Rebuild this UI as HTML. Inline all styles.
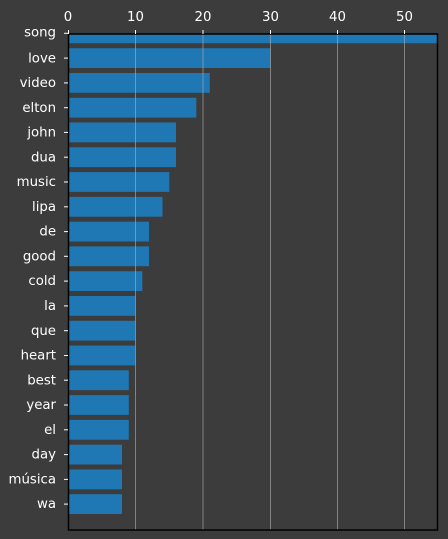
<!DOCTYPE html><html><head><style>body{margin:0;background:#3c3c3c}svg{display:block}text{font-family:"DejaVu Sans","Liberation Sans",sans-serif;font-size:13.3px;fill:#fff}</style></head><body>
<svg width="448" height="539" xmlns="http://www.w3.org/2000/svg">
<rect width="448" height="539" fill="#3c3c3c"/>
<defs><clipPath id="c"><rect x="68" y="34" width="370" height="496"/></clipPath></defs>
<g clip-path="url(#c)" fill="#1f77b4">
<rect x="68" y="23.4" width="380" height="19.8"/>
<rect x="68" y="48.2" width="202.5" height="19.8"/>
<rect x="68" y="73" width="141.8" height="19.8"/>
<rect x="68" y="97.8" width="128.3" height="19.8"/>
<rect x="68" y="122.5" width="108" height="19.8"/>
<rect x="68" y="147.3" width="108" height="19.8"/>
<rect x="68" y="172.1" width="101.3" height="19.8"/>
<rect x="68" y="196.9" width="94.5" height="19.8"/>
<rect x="68" y="221.7" width="81" height="19.8"/>
<rect x="68" y="246.4" width="81" height="19.8"/>
<rect x="68" y="271.2" width="74.3" height="19.8"/>
<rect x="68" y="296" width="67.5" height="19.8"/>
<rect x="68" y="320.8" width="67.5" height="19.8"/>
<rect x="68" y="345.6" width="67.5" height="19.8"/>
<rect x="68" y="370.3" width="60.8" height="19.8"/>
<rect x="68" y="395.1" width="60.8" height="19.8"/>
<rect x="68" y="419.9" width="60.8" height="19.8"/>
<rect x="68" y="444.7" width="54" height="19.8"/>
<rect x="68" y="469.5" width="54" height="19.8"/>
<rect x="68" y="494.2" width="54" height="19.8"/>
</g>
<g stroke="#b0b0b0" stroke-opacity="0.6" stroke-width="1">
<line x1="135.5" y1="34" x2="135.5" y2="530"/><line x1="203" y1="34" x2="203" y2="530"/><line x1="270.5" y1="34" x2="270.5" y2="530"/><line x1="337.5" y1="34" x2="337.5" y2="530"/><line x1="404.5" y1="34" x2="404.5" y2="530"/>
</g>
<rect x="68.5" y="34" width="369" height="496" fill="none" stroke="#000" stroke-width="1.5"/>
<g stroke="#fff" stroke-width="1">
<line x1="68.5" y1="30" x2="68.5" y2="34"/><line x1="135.5" y1="30" x2="135.5" y2="34"/><line x1="203" y1="30" x2="203" y2="34"/><line x1="270.5" y1="30" x2="270.5" y2="34"/><line x1="337.5" y1="30" x2="337.5" y2="34"/><line x1="404.5" y1="30" x2="404.5" y2="34"/>
</g>
<g text-anchor="middle"><text x="68" y="21">0</text><text x="135.5" y="21">10</text><text x="203" y="21">20</text><text x="270.5" y="21">30</text><text x="337.5" y="21">40</text><text x="404.5" y="21">50</text></g>
<g stroke="#fff"><line x1="64" y1="33.3" x2="68" y2="33.3"/><line x1="64" y1="58.1" x2="68" y2="58.1"/><line x1="64" y1="82.9" x2="68" y2="82.9"/><line x1="64" y1="107.7" x2="68" y2="107.7"/><line x1="64" y1="132.4" x2="68" y2="132.4"/><line x1="64" y1="157.2" x2="68" y2="157.2"/><line x1="64" y1="182" x2="68" y2="182"/><line x1="64" y1="206.8" x2="68" y2="206.8"/><line x1="64" y1="231.6" x2="68" y2="231.6"/><line x1="64" y1="256.3" x2="68" y2="256.3"/><line x1="64" y1="281.1" x2="68" y2="281.1"/><line x1="64" y1="305.9" x2="68" y2="305.9"/><line x1="64" y1="330.7" x2="68" y2="330.7"/><line x1="64" y1="355.5" x2="68" y2="355.5"/><line x1="64" y1="380.2" x2="68" y2="380.2"/><line x1="64" y1="405" x2="68" y2="405"/><line x1="64" y1="429.8" x2="68" y2="429.8"/><line x1="64" y1="454.6" x2="68" y2="454.6"/><line x1="64" y1="479.4" x2="68" y2="479.4"/><line x1="64" y1="504.1" x2="68" y2="504.1"/></g>
<g text-anchor="end" dominant-baseline="central">
<text x="56" y="33">song</text><text x="56" y="59">love</text><text x="56" y="83.5">video</text><text x="56" y="108.3">elton</text><text x="56" y="133">john</text><text x="56" y="157.8">dua</text><text x="56" y="182.6">music</text><text x="56" y="207.4">lipa</text><text x="56" y="232.2">de</text><text x="56" y="257">good</text><text x="56" y="281.7">cold</text><text x="56" y="306.5">la</text><text x="56" y="331.3">que</text><text x="56" y="356.1">heart</text><text x="56" y="380.8">best</text><text x="56" y="405.6">year</text><text x="56" y="430.4">el</text><text x="56" y="455.2">day</text><text x="56" y="480">música</text><text x="56" y="504.7">wa</text>
</g>
</svg></body></html>
